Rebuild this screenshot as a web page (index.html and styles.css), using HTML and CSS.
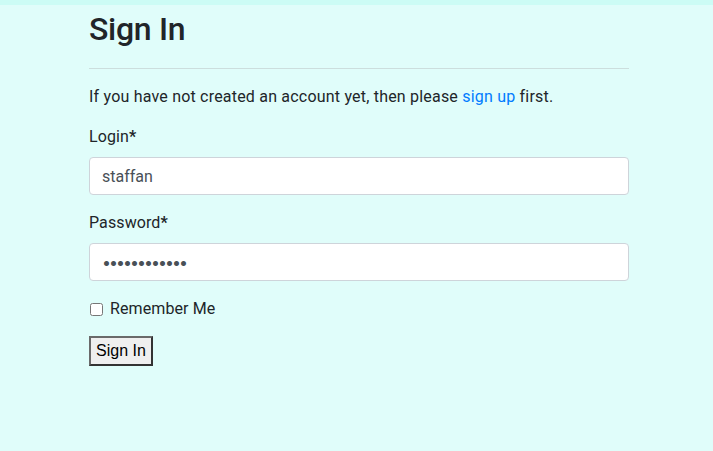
FILE: index.html
```html
<!DOCTYPE html>
<html>
<head>
<meta charset="utf-8">
<link rel="stylesheet" href="styles.css">
</head>
<body>
<div class="topbar"></div>
<main class="container">
  <h1 class="title">Sign In</h1>
  <hr class="rule">
  <p class="intro">If you have not created an account yet, then please <a href="#" class="link">sign up</a> first.</p>
  <form class="form">
    <div class="group">
      <label class="label" for="login">Login<span class="req">*</span></label>
      <input class="input" id="login" type="text" value="staffan">
    </div>
    <div class="group">
      <label class="label" for="password">Password<span class="req">*</span></label>
      <input class="input input-pass" id="password" type="password" value="abcdefghijkl">
    </div>
    <div class="check">
      <input class="checkbox" id="remember" type="checkbox">
      <label class="check-label" for="remember">Remember Me</label>
    </div>
    <button class="btn" type="submit">Sign In</button>
  </form>
</main>
</body>
</html>
```

FILE: styles.css
```css
html, body {
  margin: 0;
  padding: 0;
  background: #e0fdfa;
  font-family: Roboto, "Noto Sans", sans-serif;
  font-size: 16px;
  color: #212529;
  height: 100%;
}
.topbar {
  height: 5px;
  background: #ccfcf5;
}
.container {
  width: 540px;
  padding-left: 89px;
}
.title {
  margin: 0;
  padding-top: 5px;
  font-family: Roboto, "Liberation Sans", sans-serif;
  font-size: 32px;
  font-weight: 500;
  line-height: 38px;
  letter-spacing: -0.3px;
  color: #212529;
}
.rule {
  margin: 20px 0 0;
  border: 0;
  border-top: 1px solid #ccdedd;
  height: 0;
}
.intro {
  margin: 16px 0 16px;
  line-height: 24px;
  letter-spacing: 0.2px;
}
.link {
  color: #007bff;
  text-decoration: none;
}
.group {
  margin-bottom: 16px;
}
.label {
  display: block;
  line-height: 24px;
  margin-bottom: 8px;
  letter-spacing: 0.1px;
}
.req {
  font-weight: 700;
}
.input {
  display: block;
  box-sizing: border-box;
  width: 100%;
  height: 38px;
  padding: 6px 12px;
  font-family: Roboto, "Noto Sans", sans-serif;
  font-size: 16px;
  color: #495057;
  background: #fff;
  border: 1px solid #ced4da;
  border-radius: 4px;
  margin: 0;
}
.input-pass {
  font-family: Inter, sans-serif;
  letter-spacing: -2px;
}
.check {
  display: flex;
  align-items: center;
  height: 24px;
  margin-bottom: 15px;
}
.checkbox {
  margin: 0 7px 0 1px;
  width: 13px;
  height: 13px;
}
.check-label {
  line-height: 24px;
  letter-spacing: 0.1px;
}
.btn {
  display: block;
  font-family: "Liberation Sans", Arial, sans-serif;
  font-size: 16px;
  height: 30px;
  padding: 0 5px;
  background: #efefef;
  color: #000;
  border: 2px solid #333;
  border-color: #6a6a6a #333 #333 #6a6a6a;
  border-radius: 0;
}
```
